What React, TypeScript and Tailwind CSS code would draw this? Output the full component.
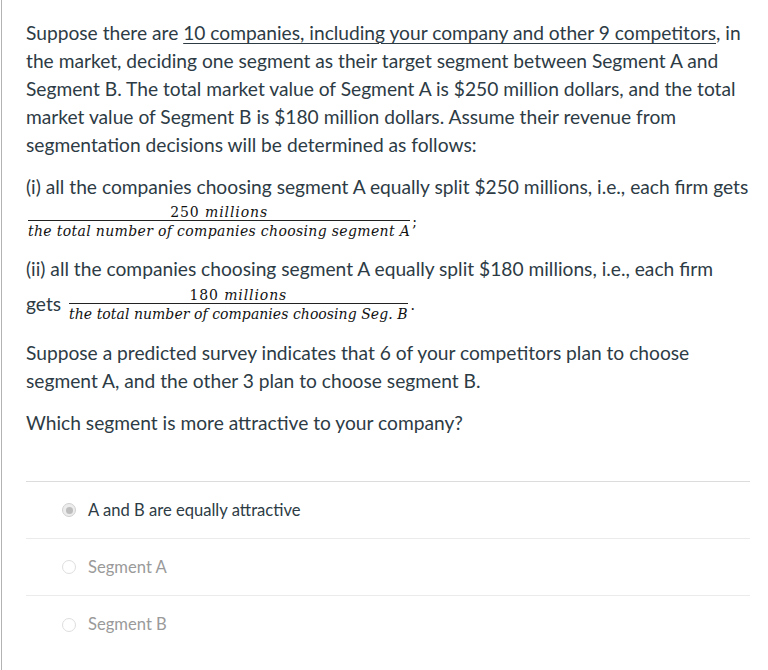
import React from "react";

const lato = { fontFamily: "Lato, 'Open Sans', sans-serif" };

function Frac({ num, den, tight }: { num: React.ReactNode; den: React.ReactNode; tight?: boolean }) {
  return (
    <span className="inline-flex flex-col items-center">
      <span className="leading-[16px] text-[14px] whitespace-nowrap tracking-[0.9px]">{num}</span>
      <span className="block h-px w-full bg-[#222]" />
      <span
        className={
          tight
            ? "leading-[20px] text-[14px] italic whitespace-nowrap tracking-[0.05px]"
            : "leading-[20px] text-[14px] italic whitespace-nowrap tracking-[0.35px]"
        }
      >
        {den}
      </span>
    </span>
  );
}

function Radio({ checked }: { checked?: boolean }) {
  if (checked) {
    return (
      <span className="flex h-[14px] w-[14px] items-center justify-center rounded-full border border-[#d0d0d0] bg-[#ececec]">
        <span className="h-[7px] w-[7px] rounded-full bg-[#bdbdbd]" />
      </span>
    );
  }
  return <span className="block h-[14px] w-[14px] rounded-full border border-[#dedede] bg-white" />;
}

export default function App() {
  const math = { fontFamily: "'DejaVu Serif', 'Liberation Serif', serif" };
  return (
    <div className="min-h-[670px] bg-white">
      <div className="ml-px min-h-[670px] border-l border-[#b3b3b3] pl-[24px] pr-[18px] pt-[19px] text-[#2d3b45]" style={lato}>
        <p className="text-[19.2px] leading-[28px]">
          Suppose there are{" "}
          <span className="underline decoration-1 underline-offset-[3px]">
            10 companies, including your company and other 9 competitors
          </span>
          , in the market, deciding one segment as their target segment between Segment A and Segment B. The total
          market value of Segment A is $250 million dollars, and the total market value of Segment B is $180 million
          dollars. Assume their revenue from segmentation decisions will be determined as follows:
        </p>

        <div className="mt-[14px] text-[19.2px] leading-[28px]">
          <div className="whitespace-nowrap">
            (i) all the companies choosing segment A equally split $250 millions, i.e., each firm gets
          </div>
          <div className="flex h-[42px] items-center pl-[2px] text-[#111]" style={math}>
            <Frac
              num={
                <>
                  250 <i>millions</i>
                </>
              }
              den="the total number of companies choosing segment A"
            />
            <span className="ml-[2px] text-[14px] leading-none">;</span>
          </div>
        </div>

        <div className="mt-[12px] text-[19.2px] leading-[28px]">
          <div className="whitespace-nowrap">
            (ii) all the companies choosing segment A equally split $180 millions, i.e., each firm
          </div>
          <div className="flex h-[42px] items-center">
            <span className="mr-[8px]">gets</span>
            <span className="flex items-center pt-[2px] text-[#111]" style={math}>
              <Frac
                tight
                num={
                  <>
                    180 <i>millions</i>
                  </>
                }
                den="the total number of companies choosing Seg. B"
              />
              <span className="ml-[3px] text-[14px] leading-none">.</span>
            </span>
          </div>
        </div>

        <p className="mt-[14px] text-[19.2px] leading-[28px]">
          Suppose a predicted survey indicates that 6 of your competitors plan to choose segment A, and the other 3
          plan to choose segment B.
        </p>

        <p className="mt-[14px] text-[19.2px] leading-[28px]">Which segment is more attractive to your company?</p>

        <div className="mt-[44px] border-t border-[#dcdcdc]">
          <div className="flex h-[57px] items-center border-b border-[#ebebeb] pl-[36px]">
            <Radio checked />
            <span className="ml-[12px] text-[16.6px] text-[#2d3b45]">A and B are equally attractive</span>
          </div>
          <div className="flex h-[57px] items-center border-b border-[#ebebeb] pl-[36px]">
            <Radio />
            <span className="ml-[12px] text-[16.6px] text-[#9a9a9a]">Segment A</span>
          </div>
          <div className="flex h-[57px] items-center pl-[36px]">
            <Radio />
            <span className="ml-[12px] text-[16.6px] text-[#9a9a9a]">Segment B</span>
          </div>
        </div>
      </div>
    </div>
  );
}
